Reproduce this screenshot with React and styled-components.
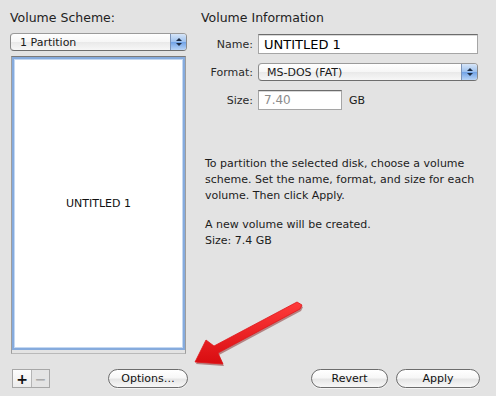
import React from 'react'
import styled, { createGlobalStyle } from 'styled-components'

const GlobalStyle = createGlobalStyle`
  html, body { margin: 0; padding: 0; background: #e3e3e3; }
  body { font-family: "DejaVu Sans", "Liberation Sans", sans-serif; color: #1a1a1a; }
`

const Window = styled.div`
  position: relative;
  width: 496px;
  height: 396px;
  box-sizing: border-box;
  padding: 10px 16px 8px 10px;
  display: flex;
  flex-direction: column;
  overflow: hidden;
`

const Main = styled.div`
  flex: 1;
  display: flex;
  gap: 14px;
  min-height: 0;
`

const LeftCol = styled.div`
  width: 177px;
  display: flex;
  flex-direction: column;
`

const RightCol = styled.div`
  flex: 1;
  display: flex;
  flex-direction: column;
`

const Heading = styled.div`
  font-size: 12.5px;
  line-height: 16px;
  height: 16px;
  color: #222;
`

const Popup = styled.div`
  position: relative;
  height: 18px;
  box-sizing: border-box;
  width: ${(p) => p.$width || '100%'};
  margin-top: ${(p) => p.$top || '0px'};
  border: 1px solid #8a8a8a;
  border-top-color: #9a9a9a;
  border-bottom-color: #6e6e6e;
  border-radius: 4px;
  background: linear-gradient(#ffffff, #f6f6f6 50%, #e9e9e9 51%, #f7f7f7);
  display: flex;
  align-items: center;
  font-size: 11px;
  padding-left: ${(p) => p.$pad || '9px'};
  overflow: hidden;
`

const Stepper = styled.div`
  margin-left: auto;
  width: 15px;
  height: 100%;
  border-left: 1px solid #7b93b8;
  background: linear-gradient(#d6e5f8, #9cc0ee 50%, #6fa1e6 51%, #b9d4f6);
  display: flex;
  flex-direction: column;
  align-items: center;
  justify-content: center;
  gap: 2px;
`

const Tri = styled.div`
  width: 0;
  height: 0;
  border-left: 3px solid transparent;
  border-right: 3px solid transparent;
  ${(p) => (p.$down ? 'border-top: 3px solid #1c2c44;' : 'border-bottom: 3px solid #1c2c44;')}
`

const ListFrame = styled.div`
  flex: 1;
  margin-top: 5px;
  margin-left: 1px;
  width: 175px;
  box-sizing: border-box;
  border: 1px solid #9d9d9d;
  border-top-color: #7a7a7a;
  border-bottom-color: #b9b9b9;
  padding-bottom: 3px;
  display: flex;
`

const ListBox = styled.div`
  flex: 1;
  background: #fff;
  border: 2px solid #86abdd;
  box-shadow: inset 0 0 0 1px #c4d8f2;
  display: flex;
  align-items: center;
  justify-content: center;
  font-size: 11px;
  color: #111;
`

const Form = styled.div`
  display: grid;
  grid-template-columns: 52px auto;
  column-gap: 5px;
  row-gap: 9px;
  margin-top: 8px;
  align-items: center;
`

const Label = styled.div`
  text-align: right;
  font-size: 11px;
  color: #2a2a2a;
`

const FieldRow = styled.div`
  display: flex;
  align-items: center;
  gap: 7px;
  font-size: 11px;
`

const TextField = styled.div`
  width: ${(p) => p.$width};
  height: 20px;
  box-sizing: border-box;
  background: #fff;
  border: 1px solid #a5a5a5;
  border-top-color: #6c6c6c;
  box-shadow: inset 0 1px 0 #d8d8d8;
  display: flex;
  align-items: center;
  padding-left: 5px;
  font-size: ${(p) => (p.$dim ? '12px' : '13px')};
  color: ${(p) => (p.$dim ? '#8c8c8c' : '#000')};
`

const Para = styled.p`
  margin: ${(p) => p.$top} 0 0 4px;
  font-size: 11px;
  line-height: 16px;
  color: #1c1c1c;
`

const BottomBar = styled.div`
  margin-top: 15px;
  height: 19px;
  display: flex;
  align-items: center;
`

const PlusMinus = styled.div`
  margin-left: 2px;
  display: flex;
  height: 19px;
  box-sizing: border-box;
  border: 1px solid #a7a7a7;
`

const PMButton = styled.div`
  width: ${(p) => (p.$first ? '18px' : '17px')};
  height: 100%;
  display: flex;
  align-items: center;
  justify-content: center;
  font-size: 14px;
  font-weight: bold;
  color: ${(p) => (p.$off ? '#a9a9a9' : '#111')};
  background: ${(p) => (p.$off ? '#e4e4e4' : 'linear-gradient(#fdfdfd, #ececec)')};
  border-right: ${(p) => (p.$first ? '1px solid #b5b5b5' : 'none')};
`

const Button = styled.div`
  width: ${(p) => p.$width};
  height: 19px;
  margin-left: ${(p) => p.$left || '0px'};
  box-sizing: border-box;
  border: 1px solid #6c6c6c;
  border-radius: 10px;
  background: linear-gradient(#ffffff, #f7f7f7 45%, #e6e6e6 55%, #f8f8f8);
  box-shadow: 0 1px 0 rgba(255, 255, 255, 0.6);
  display: flex;
  align-items: center;
  justify-content: center;
  font-size: 11px;
  color: #111;
`

const Overlay = styled.svg`
  position: absolute;
  left: 0;
  top: 0;
  pointer-events: none;
`

const arrowPts = '297,302 214,346 206,340 195,362 223,364 218,353 300,309 302,305'

function Arrow() {
  return (
    <Overlay width="496" height="396" viewBox="0 0 496 396">
      <defs>
        <linearGradient id="red" x1="0" y1="0" x2="0" y2="1">
          <stop offset="0" stopColor="#ff3b3b" />
          <stop offset="1" stopColor="#d80c10" />
        </linearGradient>
      </defs>
      <polygon points={arrowPts} fill="#7a0d0d" opacity="0.45" transform="translate(1 2)" />
      <polygon points={arrowPts} fill="url(#red)" stroke="#e0161a" strokeWidth="0.8" strokeLinejoin="round" />
    </Overlay>
  )
}

export default function App() {
  return (
    <>
      <GlobalStyle />
      <Window>
        <Main>
          <LeftCol>
            <Heading>Volume Scheme:</Heading>
            <Popup $top="7px">
              1 Partition
              <Stepper>
                <Tri />
                <Tri $down />
              </Stepper>
            </Popup>
            <ListFrame>
              <ListBox>UNTITLED 1</ListBox>
            </ListFrame>
          </LeftCol>
          <RightCol>
            <Heading>Volume Information</Heading>
            <Form>
              <Label>Name:</Label>
              <TextField $width="220px">UNTITLED 1</TextField>
              <Label>Format:</Label>
              <Popup $width="220px" $pad="8px">
                MS-DOS (FAT)
                <Stepper>
                  <Tri />
                  <Tri $down />
                </Stepper>
              </Popup>
              <Label>Size:</Label>
              <FieldRow>
                <TextField $width="84px" $dim>7.40</TextField>
                GB
              </FieldRow>
            </Form>
            <Para $top="46px">
              To partition the selected disk, choose a volume scheme. Set the name, format, and size for each
              volume. Then click Apply.
            </Para>
            <Para $top="13px">
              A new volume will be created.
              <br />
              Size: 7.4 GB
            </Para>
          </RightCol>
        </Main>
        <BottomBar>
          <PlusMinus>
            <PMButton $first>+</PMButton>
            <PMButton $off>−</PMButton>
          </PlusMinus>
          <Button $width="80px" $left="58px">Options…</Button>
          <Button $width="77px" $left="auto">Revert</Button>
          <Button $width="84px" $left="8px">Apply</Button>
        </BottomBar>
        <Arrow />
      </Window>
    </>
  )
}
